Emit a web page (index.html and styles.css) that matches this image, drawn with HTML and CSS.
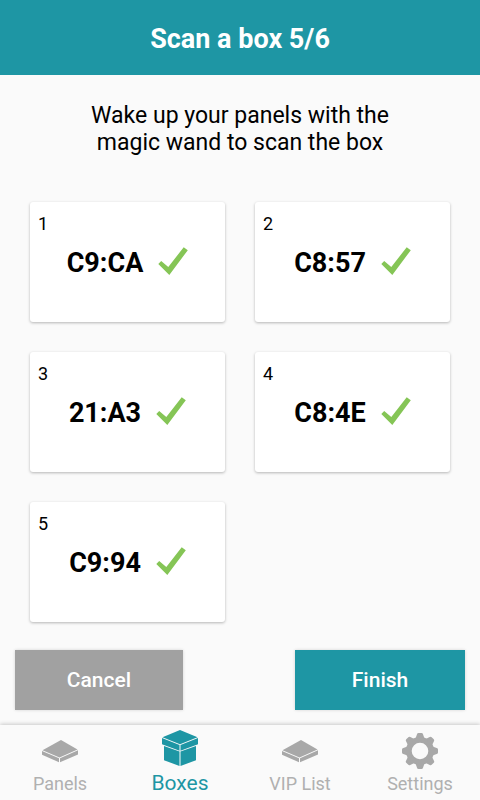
FILE: index.html
```html
<!DOCTYPE html>
<html lang="en">
<head>
<meta charset="utf-8">
<meta name="viewport" content="width=device-width, initial-scale=1">
<title>Scan a box</title>
<link rel="stylesheet" href="styles.css">
</head>
<body>
<svg class="defs" aria-hidden="true">
  <symbol id="check" viewBox="0 1 30 30"><path d="M0.300 18 3.200 15 10.300 21 25.700 1.200 29.800 4.200 11.300 28.900Z"/></symbol>
  <symbol id="panel" viewBox="0 0 36 36">
    <path d="M19 7 35.500 16.500 17.500 24.500 0.500 17.300Z"/>
    <path d="M0 18 17 25.200V29.300L0 21.800Z"/>
    <path d="M36 17.200V21.500L18 29.300V25.200Z"/>
  </symbol>
  <symbol id="box" viewBox="0 0 36 36">
    <path d="M18 0 35.500 7.300 18 14.200 0.500 7.300Z"/>
    <path d="M0 8 17.500 15V20.700L0 14.300Z"/>
    <path d="M36 8V14.300L18.500 20.700V15Z"/>
    <path d="M2 15.900 17.500 21.600V36L2 30.200Z"/>
    <path d="M34 15.900V30.200L18.500 36V21.600Z"/>
  </symbol>
  <symbol id="gear" viewBox="0 0 36 36">
    <path fill-rule="evenodd" d="M18 4A14 14 0 1 0 18 32 14 14 0 1 0 18 4ZM18 9.700A8.300 8.300 0 1 1 18 26.300 8.300 8.300 0 1 1 18 9.700Z"/>
    <g id="teeth">
      <path id="tooth" d="M13.500 5.500 15 1.300Q15.300 0 16.500 0H19.500Q20.700 0 21 1.300L22.500 5.500Z"/>
      <use href="#tooth" transform="rotate(90 18 18)"/>
      <use href="#tooth" transform="rotate(180 18 18)"/>
      <use href="#tooth" transform="rotate(270 18 18)"/>
    </g>
    <use href="#teeth" transform="rotate(45 18 18)"/>
  </symbol>
</svg>
<header class="header"><h1>Scan a box 5/6</h1></header>
<main class="content">
  <p class="intro">Wake up your panels with the magic wand to scan the box</p>
  <ol class="grid">
    <li class="card"><span class="num">1</span><div class="code">C9:CA<svg class="check"><use href="#check"/></svg></div></li>
    <li class="card"><span class="num">2</span><div class="code">C8:57<svg class="check"><use href="#check"/></svg></div></li>
    <li class="card"><span class="num">3</span><div class="code">21:A3<svg class="check"><use href="#check"/></svg></div></li>
    <li class="card"><span class="num">4</span><div class="code">C8:4E<svg class="check"><use href="#check"/></svg></div></li>
    <li class="card"><span class="num">5</span><div class="code">C9:94<svg class="check"><use href="#check"/></svg></div></li>
  </ol>
</main>
<div class="actions">
  <button type="button" class="btn cancel">Cancel</button>
  <button type="button" class="btn finish">Finish</button>
</div>
<nav class="tabs">
  <a href="#panels" class="tab"><svg class="icon"><use href="#panel"/></svg>Panels</a>
  <a href="#boxes" class="tab active" aria-current="page"><svg class="icon"><use href="#box"/></svg>Boxes</a>
  <a href="#vip" class="tab"><svg class="icon"><use href="#panel"/></svg>VIP List</a>
  <a href="#settings" class="tab"><svg class="icon"><use href="#gear"/></svg>Settings</a>
</nav>
</body>
</html>
```
FILE: styles.css
```css
* { box-sizing: border-box; }
body {
  margin: 0;
  min-height: 100vh;
  display: flex;
  flex-direction: column;
  background: #fafafa;
  color: #000;
  font-family: Roboto, "Liberation Sans", sans-serif;
}
.defs { position: absolute; width: 0; height: 0; }
.header {
  padding: 23px 16px 20px;
  background: #1e96a4;
  color: #fff;
  text-align: center;
}
.header h1 { margin: 0; font-size: 27px; line-height: 32px; font-weight: 700; }
.content { flex: 1; padding: 27px 30px 28px; }
.intro {
  max-width: 330px;
  margin: 0 auto 46px;
  font-size: 23px;
  line-height: 27px;
  text-align: center;
}
.grid {
  display: grid;
  grid-template-columns: 1fr 1fr;
  gap: 30px;
  margin: 0;
  padding: 0;
  list-style: none;
}
.card {
  height: 120px;
  padding: 11px 8px;
  background: #fff;
  border-radius: 3px;
  box-shadow: 0 1px 3px rgba(0, 0, 0, .28);
}
.num { display: block; font-size: 18px; line-height: 21px; }
.code {
  display: flex;
  align-items: flex-start;
  justify-content: center;
  gap: 15px;
  margin-top: 13px;
  font-size: 27px;
  line-height: 32px;
  font-weight: 700;
}
.check { width: 30px; height: 30px; fill: #85c556; }
.actions {
  display: flex;
  justify-content: space-between;
  padding: 0 15px 15px;
}
.btn {
  width: 170px;
  height: 60px;
  padding: 0;
  border: 0;
  color: #fff;
  font: 500 21px/24px Roboto, "Liberation Sans", sans-serif;
  box-shadow: 0 0 3px rgba(0, 0, 0, .16);
}
.cancel { width: 168px; background: #a1a1a1; }
.finish { background: #1e96a4; }
.tabs {
  display: flex;
  height: 75px;
  box-shadow: 0 -1px 4px rgba(0, 0, 0, .2);
}
.tab {
  flex: 1;
  display: flex;
  flex-direction: column;
  align-items: center;
  padding-top: 8px;
  gap: 4px;
  color: #b0b0b0;
  font-size: 18px;
  line-height: 22px;
  text-decoration: none;
}
.tab.active { padding-top: 5px; gap: 6px; color: #1e96a4; font-size: 21px; }
.icon { width: 36px; height: 36px; fill: #a8a8a8; }
.active .icon { fill: #1e96a4; }
```
